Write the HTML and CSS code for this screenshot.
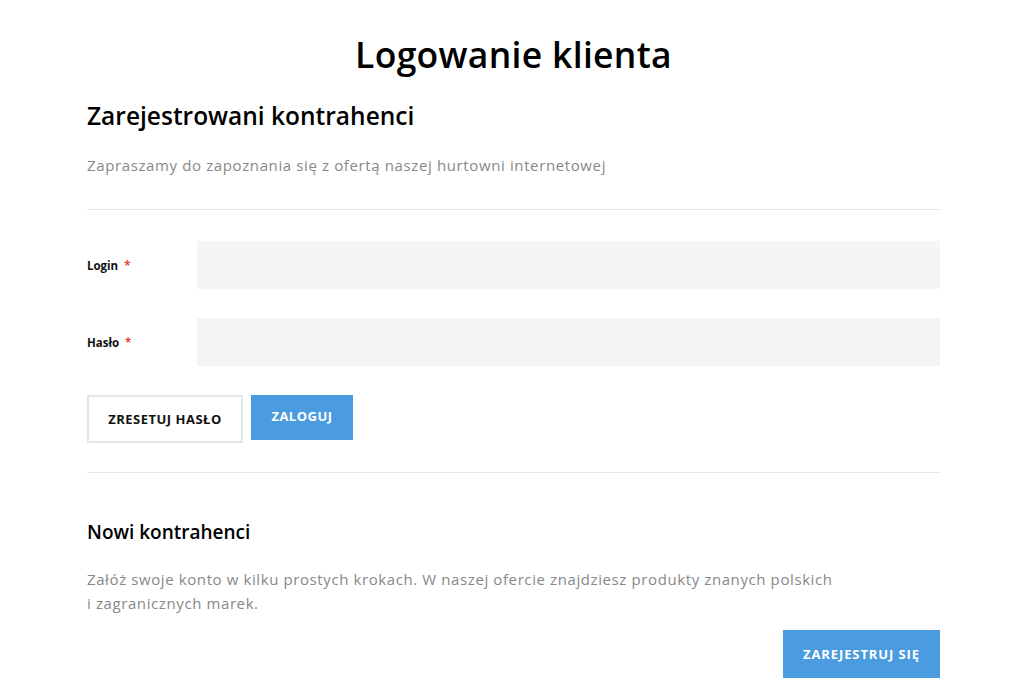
FILE: index.html
```html
<!DOCTYPE html>
<html lang="pl">
<head>
<meta charset="utf-8">
<title>Logowanie klienta</title>
<link rel="stylesheet" href="styles.css">
</head>
<body>
<main class="page">
  <h1 class="page-title">Logowanie klienta</h1>
  <section class="block">
    <h2 class="block-title">Zarejestrowani kontrahenci</h2>
    <p class="block-text">Zapraszamy do zapoznania się z ofertą naszej hurtowni internetowej</p>
  </section>
  <hr class="sep">
  <form class="login-form">
    <div class="field">
      <label class="field-label" for="login">Login <span class="req">*</span></label>
      <input class="field-input" id="login" type="text">
    </div>
    <div class="field">
      <label class="field-label" for="pass">Hasło <span class="req">*</span></label>
      <input class="field-input" id="pass" type="password">
    </div>
    <div class="actions">
      <button type="button" class="btn btn-outline">ZRESETUJ HASŁO</button>
      <button type="button" class="btn btn-primary btn-login">ZALOGUJ</button>
    </div>
  </form>
  <hr class="sep">
  <section class="new-block">
    <h3 class="new-title">Nowi kontrahenci</h3>
    <p class="new-text">Załóż swoje konto w kilku prostych krokach. W naszej ofercie znajdziesz produkty znanych polskich<br>i zagranicznych marek.</p>
    <div class="register-row">
      <button type="button" class="btn btn-primary btn-register">ZAREJESTRUJ SIĘ</button>
    </div>
  </section>
</main>
</body>
</html>
```

FILE: styles.css
```css
* { box-sizing: border-box; }
html, body { margin: 0; padding: 0; background: #fff; }
body {
  font-family: "Open Sans", "Liberation Sans", sans-serif;
  color: #000;
}
.page {
  width: 858px;
  margin: 0 auto;
  padding-top: 30px;
  padding-left: 5px;
}
.page-title {
  margin: 0;
  text-align: center;
  font-size: 35.5px;
  font-weight: 600;
  line-height: 48px;
  letter-spacing: 0.3px;
}
.block-title {
  margin: 22px 0 0;
  font-size: 24.5px;
  font-weight: 600;
  line-height: 32px;
}
.block-text {
  margin: 21px 0 0;
  font-size: 15px;
  line-height: 24px;
  letter-spacing: 0.62px;
  color: #888;
}
.sep {
  margin: 0;
  border: 0;
  border-top: 1px solid #e8e8e8;
}
.block + .sep { margin-top: 32px; }
.login-form { padding-top: 31px; }
.field {
  display: flex;
  align-items: center;
  margin-bottom: 29px;
}
.field-label {
  width: 110px;
  flex: none;
  font-size: 11.5px;
  font-weight: 700;
  color: #111;
}
.req { color: #e04a3a; margin-left: 3px; }
.field-input {
  flex: 1;
  height: 48px;
  border: 0;
  background: #f5f5f5;
  outline: none;
}
.actions {
  display: flex;
  align-items: flex-start;
  gap: 8px;
}
.btn {
  font-family: inherit;
  font-size: 13px;
  font-weight: 700;
  letter-spacing: 0.5px;
  cursor: pointer;
  border: 0;
  padding: 0;
}
.btn-outline {
  width: 156px;
  height: 48px;
  background: #fff;
  border: 2px solid #e6e6e6;
  color: #111;
}
.btn-primary {
  background: #4a9be0;
  color: #fff;
}
.btn-login {
  width: 102px;
  height: 45px;
  padding-bottom: 3px;
}
.login-form + .sep { margin-top: 29px; }
.new-block { padding-top: 46px; }
.new-title {
  margin: 0;
  font-size: 19px;
  font-weight: 600;
  line-height: 26px;
}
.new-text {
  margin: 22px 0 0;
  font-size: 15px;
  line-height: 24px;
  letter-spacing: 0.6px;
  color: #888;
}
.register-row {
  display: flex;
  justify-content: flex-end;
  margin-top: 15px;
}
.btn-register {
  width: 157px;
  height: 48px;
  letter-spacing: 0.9px;
}
```
